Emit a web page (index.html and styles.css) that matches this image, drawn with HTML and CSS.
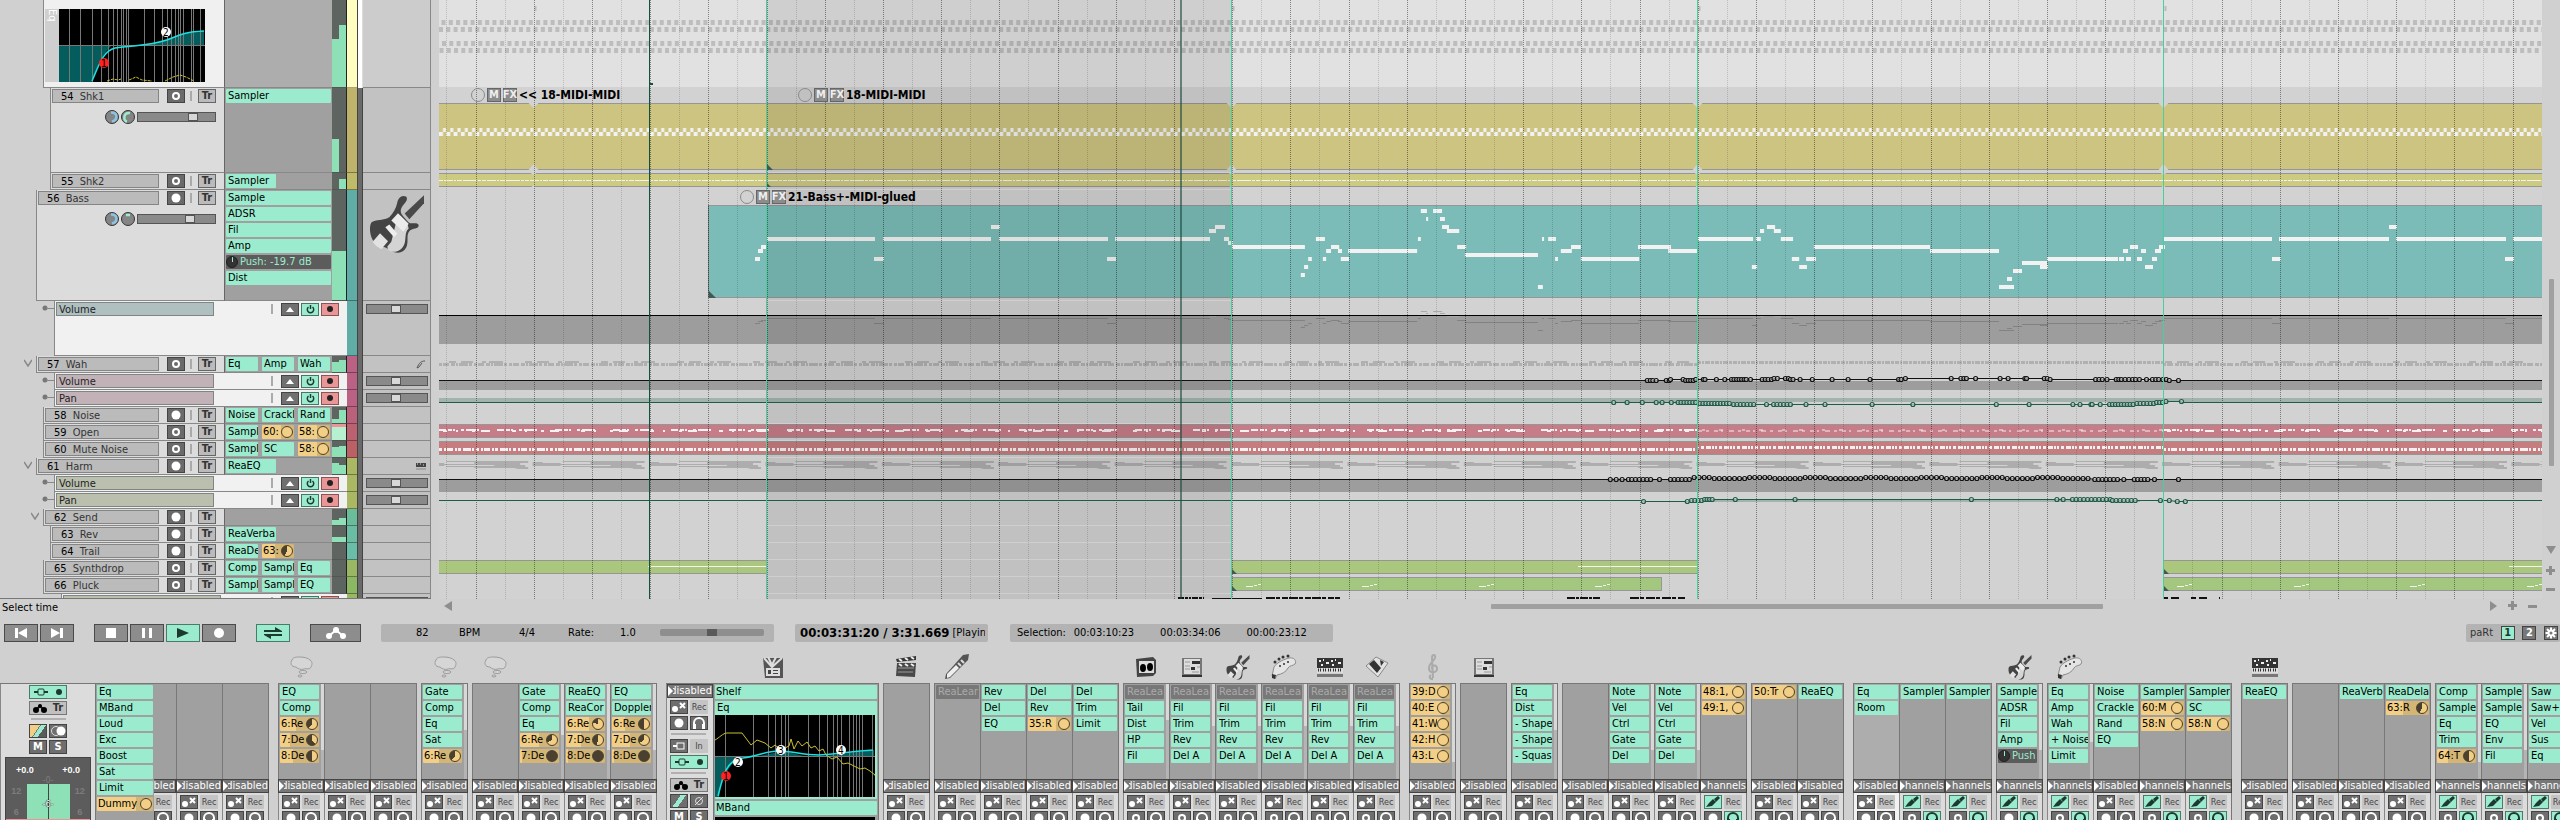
FILE: index.html
```html
<!DOCTYPE html>
<html lang="en">
<head>
<meta charset="utf-8">
<title>Arrange and mixer</title>
<link rel="stylesheet" href="styles.css">
</head>
<body>
<main class="workspace">
  <section class="tracks" id="tracks" aria-label="Track list"></section>
  <section class="arrange" id="arrange" aria-label="Arrangement"></section>
  <aside class="vscroll" aria-label="Vertical scroll">
    <div class="vscroll-thumb"></div>
    <div class="vscroll-buttons">
      <button class="bare" aria-label="Scroll down"><svg width="10" height="8"><path d="M0 0h10L5 8z"/></svg></button>
      <button class="bare" aria-label="Zoom in vertically"><svg width="10" height="10"><path d="M3 0h3v3h3v3H6v3H3V6H0V3h3z"/></svg></button>
      <button class="bare" aria-label="Zoom out vertically"><svg width="10" height="3"><path d="M0 0h9v3H0z"/></svg></button>
    </div>
  </aside>
</main>

<div class="statusbar">
  <span class="status">Select time</span>
  <div class="hscroll">
    <button class="bare" aria-label="Scroll left"><svg width="8" height="10"><path d="M8 0v10L0 5z"/></svg></button>
    <div class="hscroll-track"><div class="hscroll-thumb"></div></div>
    <div class="hscroll-end">
      <button class="bare" aria-label="Scroll right"><svg width="8" height="10"><path d="M0 0v10l7-5z"/></svg></button>
      <button class="bare" aria-label="Zoom in"><svg width="10" height="10"><path d="M3 0h3v3h3v3H6v3H3V6H0V3h3z"/></svg></button>
      <button class="bare" aria-label="Zoom out"><svg width="10" height="3"><path d="M0 0h9v3H0z"/></svg></button>
    </div>
  </div>
</div>

<nav class="transport" aria-label="Transport">
  <div class="tgroup">
    <button class="tbtn" aria-label="Go to start"><svg width="12" height="10"><path d="M0 0h3v10H0zM12 0v10L3 5z" fill="#fff"/></svg></button>
    <button class="tbtn" aria-label="Go to end"><svg width="12" height="10"><path d="M9 0h3v10H9zM0 0v10l9-5z" fill="#fff"/></svg></button>
  </div>
  <div class="tgroup">
    <button class="tbtn" aria-label="Stop"><svg width="10" height="10"><path d="M0 0h10v10H0z" fill="#fff"/></svg></button>
    <button class="tbtn" aria-label="Pause"><svg width="10" height="10"><path d="M0 0h3v10H0zM7 0h3v10H7z" fill="#fff"/></svg></button>
    <button class="tbtn on" aria-label="Play"><svg width="12" height="10"><path d="M0 0v10l12-5z" fill="#1d3a30"/></svg></button>
    <button class="tbtn" aria-label="Record"><svg width="10" height="10"><circle cx="5" cy="5" r="5" fill="#fff"/></svg></button>
  </div>
  <button class="tbtn on" aria-label="Repeat"><svg width="18" height="12"><path d="M0 3h11V0l7 4v1H0zM18 9H7v3L0 8V7h18z" fill="#1d3a30"/></svg></button>
  <button class="tbtn wide" aria-label="Envelope mode"><svg width="20" height="12"><path d="M3 9L10 3l7 6" fill="none" stroke="#fff" stroke-width="2"/><circle cx="3" cy="9" r="3" fill="#fff"/><circle cx="10" cy="3" r="3" fill="#fff"/><circle cx="17" cy="9" r="3" fill="#fff"/></svg></button>
  <div class="tbox tempo">
    <input class="bpm" aria-label="Tempo" value="82">
    <span class="bpm-label">BPM</span>
    <span class="sig">4/4</span>
    <label class="rate-label" for="rate">Rate:</label>
    <span class="rate">1.0</span>
    <input id="rate" class="rate-slider" type="range" min="0" max="100" value="50">
  </div>
  <div class="tbox clock"><b>00:03:31:20 / 3:31.669</b><span class="state">[Playin</span></div>
  <div class="tbox selection">
    <span class="sel-label">Selection:</span><span>00:03:10:23</span><span>00:03:34:06</span><span>00:00:23:12</span>
  </div>
  <div class="tbox screens">
    <span>paRt</span>
    <button class="sq on">1</button>
    <button class="sq">2</button>
    <button class="sq" aria-label="Settings"><svg width="12" height="12" viewBox="-6 -6 12 12"><g stroke="#fff" stroke-width="2"><path d="M0-5.500V5.500M-5.500 0H5.500M-4-4L4 4M4-4L-4 4"/></g><circle r="3.500" fill="#fff"/><circle r="1.500" fill="#777"/></svg></button>
  </div>
</nav>

<section class="mixer" aria-label="Mixer">
  <div class="master">
    <div class="master-panel">
      <button class="mb long on" aria-label="Routing"><svg width="14" height="8"><path d="M0 4h4M10 4h4" stroke="#1d3a30" stroke-width="2"/><rect x="4" y="1" width="6" height="6" rx="1" fill="none" stroke="#1d3a30"/></svg><svg width="6" height="6"><circle cx="3" cy="3" r="3" fill="#1d3a30"/></svg></button>
      <button class="mb long light"><svg width="14" height="10"><path d="M3 7L7 3l4 4" fill="none" stroke="#222" stroke-width="2"/><circle cx="3" cy="7" r="3"/><circle cx="7" cy="3" r="2"/><circle cx="11" cy="7" r="3"/></svg><b>Tr</b></button>
      <hr>
      <div class="mrow"><button class="mb fx3" aria-label="Effects"></button><button class="mb" aria-label="Mono"><svg width="16" height="10"><circle cx="6" cy="5" r="4.500" fill="none" stroke="#ddd"/><circle cx="11" cy="5" r="4.500" fill="#fff"/></svg></button></div>
      <div class="mrow"><button class="mb">M</button><button class="mb">S</button></div>
      <div class="bigmeter">
        <div class="peaks"><b>+0.0</b><b>+0.0</b></div>
        <div class="zero">-0-</div>
        <div class="scale"><div class="marks"><span>12</span><span>6</span></div><div class="bar"><span>-6-</span></div><div class="marks"><span>12</span><span>6</span></div></div>
        <div class="clip"></div>
      </div>
    </div>
    <div class="fxlist master-fx" id="master-fx"></div>
  </div>
  <div class="strips" id="strips"></div>
</section>
<script src="script.js"></script>
</body>
</html>
```
FILE: styles.css
```css
* { box-sizing: border-box; }
body {
  margin: 0; height: 100vh; overflow: hidden; display: flex; flex-direction: column;
  background: #d0d0d0; color: #000;
  font: 11px/14px "DejaVu Sans Condensed", "DejaVu Sans", sans-serif;
}
button { font: inherit; padding: 0; margin: 0; border: 0; display: inline-flex; align-items: center; justify-content: center; flex: none; }
svg { display: block; flex: none; }
.bare { background: none; }
.bare svg { fill: #8e8e8e; }

/* upper half */
.workspace { flex: 1; min-height: 0; display: flex; overflow: hidden; }
.tracks { width: 431px; flex: none; overflow: hidden; border-bottom: 1px solid #777; margin-right: 8px; display: flex; flex-direction: column; }
.arrange { flex: 1; min-width: 0; position: relative; overflow: hidden; background: #d2d2d2; }
.vscroll { width: 18px; flex: none; display: flex; flex-direction: column; align-items: center; justify-content: space-between; padding: 279px 0 8px; }
.vscroll-thumb { width: 5px; height: 187px; background: #a0a0a0; border-radius: 1px; }
.vscroll-buttons { display: flex; flex-direction: column; gap: 12px; align-items: center; }

/* track rows */
.track { display: flex; flex: none; height: 17px; }
.track.h88 { height: 88px; }
.track.h85 { height: 85px; }
.track.h111 { height: 111px; }
.track.h55 { height: 55px; }
.stub { flex: none; display: flex; justify-content: flex-end; padding: 3px 4px 0 0; }
.lvl1 .stub { width: 36px; }
.lvl2 .stub { width: 43px; }
.lvl3 .stub { width: 50px; }
.env .stub { width: 54px; padding: 3px 0 0; }
.lvl4 .stub { width: 61px; }
.panel { flex: 1; min-width: 0; background: #dcdcdc; border-left: 1px solid #888; border-bottom: 1px solid #888; padding: 1px 8px 0 1px; }
.sel .panel { background: #f0f0f0; }
.env .panel { background: #f1f1f1; padding-right: 8px; }
.line { display: flex; align-items: center; height: 14px; }
.name { flex: 1; height: 14px; border: 1px solid #858585; background: #bbb; line-height: 13px; color: #333; white-space: pre; overflow: hidden; padding-left: 8px; }
.name i { font-style: normal; color: #000; padding-right: 3px; }
.env .name { flex: none; width: 158px; padding-left: 2px; color: #222; border-color: #7d8585; }
.envA .name { background: #b0bfbf; }
.envB .name { background: #c2b2b8; }
.envC .name { background: #bbbfae; }
.rec { width: 18px; height: 14px; background: #6a6a6a; border: 1px solid #444; margin-left: 8px; }
.tick { width: 2px; height: 10px; background: #aaa; margin: 0 6px 0 5px; }
.env .tick { margin: 0 6px 0 auto; }
.tr { width: 18px; height: 14px; background: #bbb; border: 1px solid #666; font-weight: bold; color: #333; }
.eb { width: 18px; height: 13px; background: #707070; border: 1px solid #444; margin-left: 2px; }
.eb.pow { background: #9becce; border-color: #476; }
.eb.arm { background: #ea9696; border-color: #855; }
.mixline { display: flex; align-items: center; justify-content: flex-end; gap: 2px; padding-top: 7px; }
input[type=range] { appearance: none; margin: 0; width: 79px; height: 10px; background: #8a8a8a; border: 1px solid #555; }
input[type=range]::-webkit-slider-thumb { appearance: none; width: 10px; height: 8px; background: #d8d8d8; border: 1px solid #555; }
.rail { width: 108px; flex: none; background: #a0a0a0; border-left: 1px solid #666; border-bottom: 1px solid #888; padding: 1px 1px 0 1px; display: flex; flex-direction: column; gap: 2px; overflow: hidden; }
.rail.tri { flex-direction: row; gap: 4px; }
.tri .slot { width: 32px; flex: none; }
.rail.solo .slot { width: 50px; }
.sel .rail { background: #adadad; }
.meter { width: 15px; flex: none; border-right: 1px solid #222; border-bottom: 1px solid #555;
  background: linear-gradient(to top, #8ee1b6 var(--l), transparent 0) left / 7px 100% no-repeat, linear-gradient(to top, #8ee1b6 var(--r), transparent 0) right / 7px 100% no-repeat, #5e6460; }
.meter.hot { background: linear-gradient(#ea9696 3px, #b6f0d0 3px); }
.tint { width: 10px; flex: none; border-bottom: 1px solid rgba(0,0,0,.35); }
.edge { width: 6px; flex: none; background: #6a6a6a; border-left: 1px solid #444; border-right: 1px solid #444; }
.sel .edge { background: #fff; border-right-color: #ddd; }
.badge { width: 68px; flex: none; background: #c2c2c2; border-right: 1px solid #888; border-bottom: 1px solid #888; display: flex; align-items: center; justify-content: center; }
.badge.top { align-items: flex-start; padding: 5px 0 0; }
.env .badge.top { padding: 3px 0 0; }
.badge.right { justify-content: flex-end; padding-right: 4px; }
.badge input[type=range] { width: 62px; }
.sel .badge { background: #ccc; }
.c53 { background: #fffdbf; } .c54 { background: #bfb26a; } .c55 { background: #c0bb68; } .c56 { background: #60aca7; }
.c57 { background: #bb6184; } .c58 { background: #bb617c; } .c59 { background: #bb6170; } .c60 { background: #bb6165; }
.c61 { background: #aab863; } .c62 { background: #6abd9a; } .c63 { background: #6abda2; } .c64 { background: #6abda8; }
.c65 { background: #9ab863; } .c66 { background: #8db863; }
.eqwrap { display: flex; margin-top: 8px; }
.eqtab { width: 14px; height: 73px; background: #cfcfcf; color: #fff; writing-mode: vertical-rl; line-height: 14px; }

/* effect slots */
.slot { height: 14px; flex: none; background: #9becce; border-radius: 1px; padding: 0 0 0 2px; line-height: 14px; white-space: nowrap; overflow: hidden; display: flex; color: #000; text-align: left; justify-content: flex-start; }
.slot span { flex: 1; min-width: 0; overflow: hidden; }
.slot.off { background: #787878; color: #aaa; }
.slot.knob { background: #5c5c5c; color: #9becce; padding-left: 0; gap: 2px; }
.slot.send { padding: 0 1px 0 1px; background: linear-gradient(to right, #f2cf85 var(--fill), #d4b574 0); }
.dial { width: 12px; height: 12px; margin: 1px 0; border-radius: 50%; border: 1px solid #4a4030; flex: none; background: conic-gradient(#f2cf85 var(--p), #4a4030 0); }
.knob .dial { background: linear-gradient(#9becce, #9becce) center top / 1px 5px no-repeat, #333; border-color: #222; }

/* arrangement overlays */
.head { position: absolute; display: flex; align-items: center; gap: 2px; font-size: 12px; font-weight: bold; white-space: nowrap; }
.head button { width: 14px; height: 14px; background: #8c8c8c; border: 1px solid #666; color: #eee; font-size: 11px; }
.head .ring { background: none; border: 1px solid #8a8a8a; border-radius: 50%; }

/* status and transport */
.statusbar { height: 18px; flex: none; display: flex; align-items: center; }
.status { width: 431px; flex: none; padding-left: 2px; }
.hscroll { flex: 1; display: flex; align-items: center; padding: 0 22px 4px 13px; }
.hscroll-track { flex: 1; }
.hscroll-thumb { width: 30%; height: 5px; background: #a0a0a0; border-radius: 1px; margin-left: 51%; }
.hscroll-end { display: flex; align-items: center; gap: 10px; }
.transport { flex: none; height: 31px; display: flex; align-items: center; padding-left: 4px; }
.tgroup { display: flex; gap: 2px; margin-right: 20px; }
.tbtn { width: 34px; height: 18px; background: #8d8d8d; border: 1px solid #4a4a4a; }
.tbtn.on { background: #9becce; border-color: #4a7a68; }
.transport > .tbtn { margin-right: 20px; }
.tbtn.wide { width: 51px; }
.tbox { height: 18px; background: #b3b3b3; border-radius: 2px; display: flex; align-items: center; margin-right: 21px; overflow: hidden; white-space: nowrap; }
.tempo { width: 393px; }
.tempo > * { flex: none; }
.bpm { width: 78px; padding: 0 0 0 35px; border: 0; background: none; font: inherit; }
.bpm-label { width: 60px; }
.sig { width: 49px; }
.rate-label { width: 52px; }
.rate { width: 40px; }
input.rate-slider { width: 104px; height: 7px; background: #8e8e8e; border: 0; border-radius: 2px; }
input.rate-slider::-webkit-slider-thumb { height: 7px; background: #5a5a5a; border: 0; }
.clock { width: 193px; padding: 0 3px 0 5px; gap: 3px; margin-right: 22px; }
.clock b { font-size: 13px; }
.state { overflow: hidden; }
.selection { width: 323px; padding-left: 7px; }
.selection span { width: 90px; }
.selection .sel-label { width: 59px; }
.screens { width: 94px; margin: 0 0 0 auto; padding: 0 2px 0 4px; justify-content: space-between; color: #333; }
.sq { width: 14px; height: 14px; background: #777; border: 1px solid #444; color: #fff; font-weight: bold; }
.sq.on { background: #9becce; color: #1d3a30; }

/* mixer */
.mixer { height: 172px; flex: none; display: flex; overflow: hidden; }
.master { display: flex; flex: none; margin-top: 35px; border-top: 1px solid #777; }
.master-panel { width: 95px; background: #dcdcdc; border-left: 1px solid #888; display: flex; flex-direction: column; align-items: center; gap: 2px; padding-top: 1px; }
.master-panel hr { width: 35px; height: 2px; border: 0; background: #b0b0b0; margin: 1px 0 2px; flex: none; }
.mrow { display: flex; gap: 2px; }
.mb { width: 18px; height: 14px; background: #6e6e6e; border: 1px solid #444; color: #fff; font-weight: bold; }
.mb.long { width: 38px; justify-content: space-around; }
.mb.on { background: #9becce; border-color: #4a7a68; }
.mb.light { background: #c0c0c0; border-color: #777; color: #333; }
.mb.fx3 { background: linear-gradient(125deg, #f2cf85 42%, #777 42% 46%, #9becce 46% 66%, #5a5a5a 66%); }
.mb.fx2 { background: linear-gradient(125deg, #6e6e6e 40%, #9becce 40% 62%, #6e6e6e 62%); }
.bigmeter { width: 86px; flex: 1; margin-top: 1px; background: #5c5c5c; border: 1px solid #444; color: #fff; display: flex; flex-direction: column; }
.peaks { display: flex; justify-content: space-between; padding: 6px 10px 0; font: bold 9px/12px "Liberation Sans", sans-serif; }
.zero { text-align: center; font-size: 9px; line-height: 8px; color: #7c7c7c; }
.scale { display: flex; flex: 1; min-height: 0; }
.marks { flex: 1; display: flex; flex-direction: column; gap: 7px; align-items: center; color: #7c7c7c; font: bold 9px/14px "Liberation Sans", sans-serif; }
.bar { width: 43px; background: linear-gradient(#444, #444) center / 1px 100% no-repeat, #8ee1b6; display: flex; justify-content: center; padding-top: 13px; font-size: 9px; text-shadow: 0 0 1px #000, 0 0 1px #000; }
.clip { height: 1px; background: #ea9696; }
.fxlist { background: #a0a0a0; border-left: 1px solid #777; padding: 1px 1px 0; display: flex; flex-direction: column; gap: 2px; flex: 1; min-width: 0; min-height: 0; overflow: hidden; }
.master-fx { width: 59px; flex: none; }
.strips { flex: 1; min-width: 0; display: flex; overflow: hidden; }
.group { display: flex; flex: none; margin-right: 4px; }
.group.far { margin-right: 9px; }
.group > .strip:last-child { width: 47px; }
.group > .strip:last-child .well, .group > .strip:last-child .ctl { border-right: 1px solid #777; }
.cutter { width: 22px; overflow: hidden; display: flex; justify-content: flex-end; flex: none; }
.strip { width: 46px; flex: none; display: flex; flex-direction: column; }
.icon { height: 35px; display: flex; align-items: center; justify-content: center; padding-top: 3px; flex: none; }
.well { height: 96px; flex: none; display: flex; border-top: 1px solid #777; background: #a0a0a0; }
.strip.lit .well { background: #adadad; }
.well .fxlist { background: none; }
.well .thumb { width: 3px; margin-left: 1px; background: linear-gradient(#d8d8d8 var(--t), #b4b4b4 0); }
.mode { height: 14px; flex: none; background: #777; border: 1px solid #444; color: #fff; width: 100%; justify-content: flex-start; }
.mode svg { fill: #fff; }
.mode span { flex: 1; min-width: 0; overflow: hidden; display: flex; justify-content: flex-end; }
.ctl { flex: 1; background: #dcdcdc; border-left: 1px solid #888; display: grid; grid-template-columns: 18px 18px; gap: 2px; padding: 2px 0 0 3px; align-content: start; }
.strip.lit .ctl { background: #f2f2f2; }
.chip { background: #c4c4c4; height: 14px; color: #444; font: 9px/14px "DejaVu Sans Condensed", "DejaVu Sans", sans-serif; border-radius: 1px; }
.wide-strip { width: 213px; flex: none; }
.wide-body { display: flex; height: 137px; border-top: 1px solid #777; border-right: 1px solid #777; overflow: hidden; }
.wide-ctl { width: 47px; flex: none; background: #dcdcdc; border-left: 1px solid #888; display: flex; flex-direction: column; }
.wide-ctl .ctl { border: 0; }
.wide-ctl hr { grid-column: 1 / 3; width: 35px; height: 2px; border: 0; background: #b0b0b0; margin: 1px 0 2px 1px; }
.wide-ctl .mb.long { grid-column: 1 / 3; }
.wide-fx .slot { padding-left: 1px; }
.wide-fx .slot.eq { height: 98px; display: block; padding: 0; }
.wide-fx .slot.eq > b { display: block; font-weight: normal; padding-left: 2px; }
```
FILE: script.js
```js
const $ = id => document.getElementById(id);

/* ---------- small drawings ---------- */
const guitar = (w, h) => `<svg width="${w}" height="${h}" viewBox="0 0 162 176">
  <path d="M162 0v24L118 72 104 55z" fill="#4a4a4a"/>
  <path d="M108 4c-14-6-24 6-26 18-4 18-12 32-24 44-14 10-42 6-54 16-8 14-4 44 8 58 12 14 26 12 40 20 24 18 48 16 56-2 10-20-2-38 12-52 8-8 26-4 26-16-2-10-18-4-26-6-8-4-12-12-20-20-10-10-10-20-2-32 8-10 18-20 10-28z" fill="#444"/>
  <path d="M84 58c14 8 30 26 32 42-12 10-8 30-12 44-6 22-32 34-50 20L52 154 64 140z" fill="#d4d4d4"/>
  <path d="M84 54l32 32-16 24-36-34z" fill="#ececec"/>
  <path d="M46 96l12-8 24 28-10 10z" fill="#eee"/>
  <path d="M8 140l22-26 24 24-20 24c-12-6-20-12-26-22z" fill="#e2e2e2"/></svg>`;
const icons = {
  guitar: guitar(24, 25),
  bubble: '<svg width="24" height="22" viewBox="0 0 24 22"><g fill="#d6d6d6" stroke="#9c9c9c"><path d="M3 4C4 1 8 1 11 1c4 0 8 1 10 3 3 2 2 5 1 7-1 3-5 1-7 2-3 1-6 0-8-2C2 11 1 7 3 4z"/><ellipse cx="14" cy="16" rx="4" ry="1.500"/><ellipse cx="11" cy="20" rx="2" ry="1"/></g></svg>',
  drums: '<svg width="22" height="23" viewBox="0 0 22 23"><path d="M1 2h20v20H3z" fill="#555"/><path d="M2 2l8 9 10-9M6 1l4 8 4-8" stroke="#ddd" stroke-width="2" fill="none"/><path d="M4 12h14v8H4z" fill="#ddd"/><path d="M6 14h3v4H6zM11 14h5v1h-5zM11 17h5v1h-5z" fill="#444"/></svg>',
  clap: '<svg width="24" height="24" viewBox="0 0 24 24"><path d="M2 8h19l-1 14-19-1z" fill="#484848"/><path d="M1 4L21 1v4L2 7z" fill="#333"/><path d="M4 4l3 2M10 3l3 2M16 2l3 2M4 9l3 2M10 9l3 2M16 9l3 2" stroke="#eee" stroke-width="2"/><path d="M3 13h16M3 17h15" stroke="#999"/></svg>',
  jack: '<svg width="26" height="26" viewBox="0 0 26 26"><path d="M2 20L19 1l6-1-1 6L6 24l-5 1z" fill="#555"/><path d="M3 20l9-9 3 3-9 9-3 1z" fill="#eee"/><path d="M14 9l3 3M17 6l3 3" stroke="#ddd" stroke-width="2"/></svg>',
  speaker: '<svg width="22" height="22" viewBox="0 0 22 22"><path d="M1 3l17-2 3 3v13l-3 3-16 1z" fill="#444"/><path d="M4 5h15v12H4z" fill="#ddd"/><ellipse cx="8" cy="12" rx="3" ry="4"/><ellipse cx="15" cy="11" rx="3" ry="4"/></svg>',
  desk: '<svg width="22" height="21" viewBox="0 0 22 21"><path d="M1 1h20v19H1z" fill="#777"/><path d="M3 2h16v15H3z" fill="#ddd"/><path d="M11 4h8v3h-8zM10 10h4v3h-4z" fill="#333"/><path d="M4 5h5M4 9h5M4 12h5M11 15h7M16 10h3" stroke="#999" stroke-width="1"/><path d="M1 18h20v2H1z" fill="#333"/></svg>',
  head: '<svg width="26" height="26" viewBox="0 0 26 26"><path d="M1 22l2-9C6 8 14 5 18 4c5-1 8 3 6 6-2 2-5 1-7 4-2 4-6 6-11 7l-2 4z" fill="#e4e4e4" stroke="#8a8a8a"/><path d="M1 20l4 1-1 4-3-1z" fill="#333"/><g fill="#333"><circle cx="4" cy="8" r="1.500"/><circle cx="8" cy="5" r="1.500"/><circle cx="12" cy="3" r="1.500"/><circle cx="17" cy="2" r="1.500"/><circle cx="9" cy="12" r="1"/><circle cx="13" cy="10" r="1"/><circle cx="17" cy="8" r="1"/></g></svg>',
  synth: '<svg width="26" height="19" viewBox="0 0 26 19"><path d="M0 0h26v10H0z" fill="#333"/><path d="M2 3h2M6 2h1M9 5h3M14 3h2M18 2h1M21 5h3M4 7h2M15 7h2" stroke="#eee" stroke-width="2"/><path d="M0 10h26v5H0z" fill="#ddd"/><path d="M1 12h25" stroke="#333" stroke-width="3" stroke-dasharray="1 1 1 2"/><path d="M0 16h26v3H0z" fill="#777"/></svg>',
  keys: '<svg width="24" height="24" viewBox="0 0 24 24"><path d="M1 11L11 2l12 6-10 14z" fill="#e2e2e2" stroke="#888"/><path d="M4 9l5-4 7 8-4 5zM15 5l4 2-3 4z" fill="#333"/></svg>',
  clef: '<svg width="14" height="26" viewBox="0 0 14 26"><path d="M7 25c-4 0-4-3-2-4M7 24L6 4c0-4 4-4 3 0-1 3-7 6-6 11 1 5 9 4 8-1-1-4-6-3-5 1" fill="none" stroke="#aaa" stroke-width="2"/></svg>',
};
const jackOff = '<svg width="16" height="12"><circle cx="4" cy="8" r="3" fill="#fff"/><path d="M9 2l5 5M14 2L9 7" stroke="#fff" stroke-width="2"/></svg>';
const jackOn = '<svg width="16" height="12"><path d="M1 11l3-4 3 3zM4 7l4-4 3 3-4 4zM9 3l4-3 2 2-4 4z" fill="#1d3a30"/></svg>';
const phones = c => `<svg width="14" height="12"><path d="M2 9V6a5 5 0 0 1 10 0v3" fill="none" stroke="${c}" stroke-width="2"/><path d="M1 7h3v5H1zM10 7h3v5h-3z" fill="${c}"/></svg>`;
const dot = ring => `<svg width="10" height="10"><circle cx="5" cy="5" r="${ring ? 3 : 4.5}" fill="${ring ? 'none' : '#fff'}" stroke="#fff" stroke-width="${ring ? 2 : 0}"/></svg>`;

/* ---------- effect slots ---------- */
/* "~x" bypassed, "%x" parameter knob, "@x|value|fill" send */
function slot(t) {
  if (t[0] === '~') return `<button class="slot off"><span>${t.slice(1)}</span></button>`;
  if (t[0] === '%') return `<button class="slot knob"><i class="dial"></i><span>${t.slice(1)}</span></button>`;
  if (t[0] === '@') {
    const [n, p = 100, f = 80] = t.slice(1).split('|');
    return `<button class="slot send" style="--p:${p}%;--fill:${f}%"><span>${n}</span><i class="dial"></i></button>`;
  }
  return `<button class="slot"><span>${t}</span></button>`;
}

/* ---------- equaliser graphs ---------- */
const eqLines = [10, 21, 33, 42, 49, 54, 58, 62, 64, 67, 69, 85, 95, 103, 108, 112, 116, 119, 121, 124, 132, 134, 141];
const node = (x, y, n, c) => `<circle cx="${x}" cy="${y}" r="5" fill="${c}"/><text x="${x - 3}" y="${y + 4}" font-size="10">${n}</text>`;
const smallEq = `<svg width="146" height="73"><path d="M0 0h146v73H0z"/><path d="M0 37h52c-10 10-14 24-19 36H0z" fill="#045c5c"/><path d="M80 36c30-3 40-14 65-14v14z" fill="#045c5c"/>
<g stroke="#777">${eqLines.map(x => `<path d="M${x}.5 0v73"/>`).join('')}<path d="M0 36.500h146"/></g>
<path d="M33 72C40 56 44 42 56 39c20-3 34-2 52-8 15-6 18-8 37-9" fill="none" stroke="#1de0e0" stroke-width="1.500"/>
<path d="M48 72l6-2 5 1 3-1M70 71l7-3 6 3 10 1M106 72l8-4 7-2 6 2 8 4" fill="none" stroke="#c8c030" stroke-dasharray="3 1"/>
${node(45, 54, 1, '#f22')}${node(107, 23, 2, '#fff')}</svg>`;
const bigLines = [10, 38, 53, 60, 66, 70, 73, 93, 104, 112, 118, 122, 126, 134, 138, 141, 144, 147, 157];
const bigEq = `<svg width="160" height="82"><path d="M0 0h160v82H0z"/><path d="M0 42h30C16 44 8 60 4 82H0z" fill="#045c5c"/><path d="M40 42l28-6 25 6zM110 41l49-6v6z" fill="#045c5c"/>
<g stroke="#777">${bigLines.map(x => `<path d="M${x}.500 0v82"/>`).join('')}<path d="M0 41.500h160"/></g>
<path d="M0 25c4-2 8-7 12-7h15l9 12 6-5 8 3 6 5 4-3 6 5 8-4 2-7 3 10 4-8 4 5 5-4 4 6 4-2 4 5 4-2 3 6 6 4 5-2 6 7 5-1 6 3 6 3 5-1 5 3 5 4 4 10" fill="none" stroke="#c8c030"/>
<path d="M3 81C8 60 12 44 28 43c16-2 22-7 36-7 14 0 22 4 40 4 20-1 24-3 54-5" fill="none" stroke="#1de0e0" stroke-width="1.500"/>
${node(11, 61, 1, '#f22')}${node(23, 47, 2, '#fff')}${node(66, 35, 3, '#fff')}${node(126, 35, 4, '#fff')}</svg>`;

/* ---------- track list ---------- */
const chevron = '<svg width="8" height="8"><path d="M0 1l4 6 4-6" fill="none" stroke="#888" stroke-width="1.500"/></svg>';
const pin = '<svg width="12" height="8"><circle cx="3" cy="4" r="2.500" fill="#777"/><path d="M4 4.500h8" stroke="#888"/></svg>';
const pot = (c, d) => `<svg width="14" height="14"><circle cx="7" cy="7" r="6.500" fill="#858585" stroke="#333"/><path d="${d}" fill="none" stroke="${c}" stroke-width="2.500"/></svg>`;
const potA = pot('#8cc4e4', 'M6 2.500C13 2 13 10 7 11.500');
const vol = (label, v) => `<input type="range" aria-label="${label}" min="0" max="100" value="${v}">`;
function track(o) {
  const line = `<div class="line"><div class="name"><i>${o.n}</i> ${o.name}</div><button class="rec" aria-label="Record arm">${dot(o.ring)}</button><i class="tick"></i><button class="tr">Tr</button></div>`;
  const body = o.eq ? `<div class="eqwrap"><div class="eqtab">Eq</div>${smallEq}</div>` : line + (o.mix || '');
  return `<div class="track lvl${o.lvl} ${o.cls || ''}"><div class="stub">${o.fold ? chevron : ''}</div><div class="panel">${body}</div>
    <div class="rail ${o.rail || ''}">${(o.fx || []).map(slot).join('')}</div>
    <div class="meter ${o.hot ? 'hot' : ''}" style="--l:${o.m[0]}px;--r:${o.m[1]}px"></div><div class="tint c${o.n}"></div><div class="edge"></div>
    <div class="badge ${o.bcls || ''}">${o.badge || ''}</div></div>`;
}
function envelope(name, kind, c, cls = '') {
  return `<div class="track env ${kind} ${cls}"><div class="stub">${pin}</div><div class="panel"><div class="line"><div class="name">${name}</div><i class="tick"></i>
    <button class="eb" aria-label="Hide"><svg width="8" height="5"><path d="M0 5h8L4 0z" fill="#fff"/></svg></button>
    <button class="eb pow" aria-label="Bypass"><svg width="9" height="9"><path d="M2.500 2a3.200 3.200 0 1 0 4 0M4.500 0v4" fill="none" stroke="#1d3a30" stroke-width="1.500"/></svg></button>
    <button class="eb arm" aria-label="Arm"><svg width="6" height="6"><circle cx="3" cy="3" r="3" fill="#222"/></svg></button></div></div>
    <div class="tint c${c}"></div><div class="edge"></div><div class="badge top">${vol(name, 48)}</div></div>`;
}
$('tracks').innerHTML = [
  track({ n: 53, eq: 1, lvl: 2, cls: 'h88 sel', m: [48, 62] }),
  track({ n: 54, name: 'Shk1', lvl: 3, ring: 1, cls: 'h85', fx: ['Sampler'], m: [33, 0], mix: `<div class="mixline">${potA}${pot('#9becce', 'M9 3C2 2 2 11 6 11.500')}${vol('Volume', 74)}</div>` }),
  track({ n: 55, name: 'Shk2', lvl: 3, ring: 1, rail: 'solo', fx: ['Sampler'], m: [0, 10] }),
  track({ n: 56, name: 'Bass', lvl: 1, cls: 'h111', fx: ['Sample', 'ADSR', 'Fil', 'Amp', '%Push: -19.7 dB', 'Dist'], m: [49, 49], badge: guitar(54, 59), bcls: 'top', mix: `<div class="mixline">${potA}${pot('#9becce', 'M5 3h4')}${vol('Volume', 70)}</div>` }),
  envelope('Volume', 'envA', 56, 'h55'),
  track({ n: 57, name: 'Wah', lvl: 1, ring: 1, fold: 1, rail: 'tri', fx: ['Eq', 'Amp', 'Wah'], m: [10, 12], bcls: 'right', badge: '<svg width="10" height="9"><path d="M1 8C3 3 5 1 9 1M1 8l2-1 3-4" fill="none" stroke="#555"/></svg>' }),
  envelope('Volume', 'envB', 57), envelope('Pan', 'envB', 57),
  track({ n: 58, name: 'Noise', lvl: 2, rail: 'tri', fx: ['Noise', 'Crackl', 'Rand'], m: [4, 13] }),
  track({ n: 59, name: 'Open', lvl: 2, ring: 1, rail: 'tri', fx: ['Sampl', '@60:|100|60', '@58:|100|60'], m: [14, 14], hot: 1 }),
  track({ n: 60, name: 'Mute Noise', lvl: 2, ring: 1, rail: 'tri', fx: ['Sampl', 'SC', '@58:|100|60'], m: [10, 11] }),
  track({ n: 61, name: 'Harm', lvl: 1, fold: 1, rail: 'solo', fx: ['ReaEQ'], m: [11, 9], bcls: 'right', badge: '<svg width="10" height="7"><path d="M0 0h10v4H0z" fill="#444"/><path d="M1 1h1M4 1h1M7 2h1" stroke="#ddd"/><path d="M0 6h10" stroke="#888"/></svg>' }),
  envelope('Volume', 'envC', 61), envelope('Pan', 'envC', 61),
  track({ n: 62, name: 'Send', lvl: 2, fold: 1, m: [5, 7] }),
  track({ n: 63, name: 'Rev', lvl: 3, rail: 'solo', fx: ['ReaVerba'], m: [5, 5] }),
  track({ n: 64, name: 'Trail', lvl: 3, rail: 'tri', fx: ['ReaDe', '@63:|58|40'], m: [0, 0] }),
  track({ n: 65, name: 'Synthdrop', lvl: 2, ring: 1, rail: 'tri', fx: ['Comp', 'Sampl', 'Eq'], m: [0, 0] }),
  track({ n: 66, name: 'Pluck', lvl: 2, ring: 1, rail: 'tri', fx: ['Sampl', 'Sampl', 'EQ'], m: [0, 0] }),
  envelope('', 'envC lvl4', 65),
].join('');

/* ---------- arrangement ---------- */
const LEFT = 439, RIGHT = 2600, BAR = 58.2, SEL = 766, END = 1231.5;
const r = (x, y, w, h, f, more = '') => `<rect x="${x}" y="${y}" width="${w}" height="${h}" fill="${f}" ${more}/>`;
const seg = (x1, x2, y, h, f) => r(x1, y, x2 - x1, h, f);
const item = (x1, x2, y, h, f) => seg(x1, x2, y, h, '#969696') + seg(x1, x2, y + 1, h - 2, f);
const dash = (x1, x2, y, w, pattern, c = '#f2f2f2') => `<path d="M${x1} ${y}H${x2}" stroke="${c}" stroke-width="${w}" stroke-dasharray="${pattern}"/>`;
const corner = (x, y, s = 6) => `<path d="M${x} ${y - s}l${s} ${s}h-${s}z" fill="#3f5a50"/>`;

const bass = [[755, 760, 257], [758, 763, 249], [761, 766, 245], [766, 875, 237], [874, 884, 257], [883, 991, 237], [991, 1000, 225], [999, 1108, 237], [1107, 1116, 257], [1115, 1210, 237], [1209, 1216, 229], [1215, 1225, 225], [1224, 1229, 237], [1228, 1233, 241]];
[[29, 208, 245], [198, 208, 273], [206, 216, 265], [216, 225, 257], [235, 257, 237], [252, 260, 257], [260, 272, 249], [272, 292, 245], [289, 299, 249], [296, 316, 257], [314, 483, 249], [485, 492, 237], [492, 507, 209], [505, 510, 217], [522, 544, 209], [539, 551, 217], [544, 561, 225], [556, 586, 229], [581, 603, 245], [600, 779, 253], [779, 791, 285], [789, 794, 237], [804, 823, 237], [821, 828, 257], [835, 862, 249], [860, 884, 245], [884, 1027, 257], [1024, 1105, 245], [1098, 1169, 249], [1170, 1306, 237], [1303, 1316, 265], [1313, 1325, 237], [1323, 1333, 229], [1340, 1360, 225], [1357, 1374, 229], [1374, 1404, 237], [1401, 1419, 257], [1419, 1438, 265], [1436, 1460, 257], [1455, 1680, 245]]
  .forEach(([a, b, y]) => bass.push([1220 + a / 2.45, 1220 + b / 2.45, y]));
bass.push([1905, 1930, 245], [1930, 1999, 249], [1999, 2014, 285], [2007, 2012, 277], [2013, 2022, 269], [2022, 2047, 261]);
[[0, 24, 265], [21, 234, 257], [237, 252, 257], [249, 264, 249], [258, 273, 257], [270, 294, 245], [291, 306, 257], [303, 318, 249], [315, 339, 265], [336, 351, 257], [345, 363, 249], [357, 375, 245], [372, 696, 237], [696, 722, 257], [717, 1047, 237], [1047, 1071, 225], [1068, 1398, 237], [1395, 1422, 257], [1419, 1680, 237]]
  .forEach(([a, b, y]) => bass.push([2040 + a / 3, 2040 + b / 3, y]));

let s = '';
s += seg(LEFT, RIGHT, 0, 87, '#e1e1e1');
s += `<defs><pattern id="hat" x="439" width="7.275" height="8" y="128" patternUnits="userSpaceOnUse"><path d="M4 0h3v4H4zM0 4h4v4H0z" fill="#f2f2f2"/></pattern></defs>`;
[[22.5, 2.5], [29.5, 0], [43.5, 3], [50.5, 0.5]].forEach(([y, o]) => { s += dash(LEFT + o, RIGHT, y, 5, '4 3.275', '#bdbdbd'); });
s += item(LEFT, RIGHT, 103, 67, '#cdc481') + seg(LEFT, RIGHT, 128, 8, 'url(#hat)');
s += item(LEFT, RIGHT, 173, 14, '#cdca81') + dash(LEFT, RIGHT, 180.5, 1, '4 1 9 1 2 1 5 1 14 1 3 1');
[533.5, 1231.5, 1697.5, 2163.5].forEach(x => {
  s += `<path d="M${x - 5} 103h10l-5 5zM${x - 5} 170h10l-5-6zM${x - 3} 173h6l-3 2zM${x - 2} 187h4l-2-2z" fill="#d2d2d2"/>`;
  s += r(x + 1, 6, 2, 5, '#bbb');
});
s += item(708, RIGHT, 205, 93, '#7bbcb8') + r(708, 205, 1, 93, '#777');
bass.forEach(([a, b, y]) => { s += seg(a, b, y, 4, '#f2f2f2'); });
s += seg(LEFT, RIGHT, 316, 28, '#9d9d9d');
bass.forEach(([a, b, y]) => { s += seg(a, b, Math.round(318 + (y - 237) / 4), 1, y < 237 ? '#aaa' : '#828282'); });
s += seg(LEFT, RIGHT, 315, 1, '#000');
s += dash(LEFT, 1697, 364.5, 3, '3 1 6 2 4 1 2 1 9 1 3 2', '#b0b0b0') + dash(LEFT + 10, 1697, 362, 2, '7 5 12 9 4 3 14 22', '#b0b0b0');
s += dash(1697, 2163, 362.5, 3, '4 1 2 1 5 1 3 1', '#b0b0b0') + dash(2163, RIGHT, 364.5, 3, '3 1 6 2 4 1 2 1', '#b0b0b0') + dash(2165, RIGHT, 362, 2, '7 5 12 9 4 3 14 22', '#b0b0b0');
s += seg(LEFT, RIGHT, 381, 9, '#9d9d9d') + seg(LEFT, RIGHT, 398, 4, '#a2b3ad');
s += item(LEFT, RIGHT, 424, 14, '#c67d88') + item(LEFT, RIGHT, 441, 14, '#c67d80');
[[LEFT, 1697], [2163, RIGHT]].forEach(([a, b]) => {
  s += dash(a, b, 430, 2, '7 2 4 1 2 6 3 2 10 1 2 18', '#f2f2f2') + dash(a + 4, b, 431, 2, '4 9 2 14 3 6 9 22');
  s += dash(a, b, 449.5, 3, '3 2 2 1 6 2 2 1 3 2 8 1 2 2');
});
s += dash(1697, 2163, 431, 1, '5 4 3 5 4 3 2 6') + dash(1702, 2163, 430, 1, '3 14 4 19') + dash(1697, 2163, 447.5, 3, '2 2 3 2 5 1 2 1');
for (let x = LEFT - 22.8; x < RIGHT; x += BAR * 2) {
  s += `<path d="M${x} 462h10v1h18v3H${x}zM${x + 30} 461h28v1h-28zM${x + 30} 466h28v1h-28zM${x + 28} 464h30v1h-30zM${x + 58} 461h54v2h-8v2h5v2h3v2h-10l-4-1h-40v-2h20v-1h-20z" fill="#adadad"/>`;
}
s += seg(LEFT, RIGHT, 480, 12, '#9d9d9d') + seg(1703, 2140, 500, 2, '#a2b3ad');
s += item(300, SEL, 560, 14, '#abc77d') + seg(648, SEL, 566, 1, '#f2f2f2');
s += item(1231, 1697, 560, 14, '#abc77d') + seg(1578, 1697, 566, 1, '#f2f2f2') + item(1231, 1662, 577, 14, '#a4c77f') + r(1661, 577, 1, 14, '#969696');
s += item(2163, RIGHT, 560, 14, '#abc77d') + seg(2509, RIGHT, 566, 1, '#f2f2f2') + item(2163, RIGHT, 577, 14, '#a4c77f');
[1246, 1362, 1479, 1595, 2177, 2294, 2410, 2527].forEach(x => { s += r(x, 586, 4, 1, '#f2f2f2') + r(x + 4, 586, 3, 1, '#f2f2f2') + r(x + 8, 585, 3, 1, '#f2f2f2') + r(x + 12, 584, 3, 1, '#f2f2f2'); });
s += r(SEL, 0, END - SEL, 599, '#000', 'opacity=".08"');
[172, 189, 300, 423, 440, 457, 525, 542, 559, 576, 593].forEach(y => { s += r(SEL, y, END - SEL, 1, '#cfcfcf'); });
for (let i = -11; SEL + i * BAR / 2 < RIGHT; i++) {
  s += `<path d="M${Math.round(SEL + 0.5 + i * BAR / 2) + 0.5} 0V599" stroke="#000" opacity="${i % 2 ? '.16' : '.42'}" stroke-dasharray="1 1"/>`;
}
s += corner(SEL, 170, 7) + corner(SEL, 187, 5) + corner(709, 298, 7) + corner(1232, 574, 5) + corner(1232, 591, 5) + corner(2164, 574, 5) + corner(2164, 591, 5);

/* envelopes; points are [x, y] with x in automation units */
const ux = v => 1540 + v / 2.3758;
const run = (a, b, step, y) => { const o = []; for (let v = a; v <= b; v += step) o.push([v, typeof y === 'function' ? y(v) : y]); return o; };
const list = (y, ...v) => v.map(x => [x, y]);
function env(base, pts, c) {
  const p = pts.map(([v, y]) => [ux(v), y + 0.5]);
  return `<path d="M${LEFT} ${base + 0.5}H${p[0][0]}${p.map(q => 'L' + q.join(' ')).join('')}V${base + 0.5}H${RIGHT}" fill="none" stroke="${c}"/>` +
    p.map(([x, y]) => `<circle cx="${x.toFixed(1)}" cy="${y}" r="2" fill="#d2d2d2" fill-opacity=".7" stroke="${c}" stroke-width="1.200"/>`).join('');
}
s += env(380, [...list(380, 255, 262, 268, 276, 300, 307), ...list(379, 310, 340), ...list(380, 346, 352, 358, 364), ...list(379, 370, 388, 392, 419, 439, 455, 461, 467, 473, 479, 485, 490, 500, 528, 535, 542, 550), ...list(378, 556, 564, 583, 590), ...list(379, 595, 601, 618, 647, 694, 732, 784, 852, 858), ...list(378, 868, 977, 1000, 1007, 1013, 1035, 1093, 1112, 1152, 1156, 1198, 1205), ...list(379, 1212, 1320, 1328, 1336, 1347, 1369, 1375, 1381, 1390, 1399, 1408, 1415, 1424, 1441, 1455, 1463, 1470, 1480, 1488), ...list(380, 1495, 1517)], '#111');
s += env(402, [...list(402, 175, 207, 243, 276, 290, 312), ...run(328, 374, 7, 402), ...run(380, 455, 7, 403), ...run(460, 515, 8, 404), ...list(404, 538, 555, 563, 571, 579, 587, 595, 632, 677, 789, 886, 1084, 1162, 1266, 1283, 1309, 1312, 1331), ...run(1353, 1412, 7, 404), ...run(1418, 1460, 8, 403), ...run(1465, 1480, 7, 402), [1487, 401], [1524, 401]], '#1d5c48');
s += env(479, [...list(479, 167, 181, 195, 210), ...run(218, 268, 9, 479), [284, 479], ...run(310, 358, 9, 479), ...run(366, 1310, 12, v => Math.round(477.6 + 0.9 * Math.sin(v / 22))), ...run(1318, 1380, 9, 479), ...list(479, 1387, 1412, 1420, 1428, 1436, 1444, 1460, 1517)], '#111');
s += env(500, [[246, 501], [350, 501], ...run(360, 384, 8, 500), ...run(391, 410, 6, 499), ...list(499, 464, 606, 1025, 1228, 1243), ...run(1265, 1355, 9, 499), ...run(1360, 1422, 9, 500), ...list(500, 1474, 1495), ...list(501, 1514, 1533)], '#1d5c48');
s += dash(1178, 1204, 598, 2, '6 1 3 1 2 1', '#111') + seg(1212, 1262, 598, 1, '#111') + dash(1266, 1340, 598, 2, '9 1 4 2 6 1', '#111') + dash(1567, 1600, 598, 2, '8 1 3 1', '#111') + dash(1630, 1685, 598, 2, '9 1 4 2', '#111') + dash(2163, 2220, 598, 2, '5 3 8 12', '#111');
[SEL, 1231, 1697, 2163].forEach(x => { s += r(x, 0, 1, 599, '#48cf9c'); });
s += r(649, 0, 1, 599, '#145040') + r(650, 83, 3, 2, '#145040') + r(1180, 0, 2, 599, '#1c4a3c', 'opacity=".6"');

const head = (x, y, t) => `<div class="head" style="left:${x - LEFT}px;top:${y}px"><button class="ring" aria-label="Item volume"></button><button>M</button><button>FX</button><span>${t}</span></div>`;
$('arrange').innerHTML = `<svg width="2200" height="599"><g transform="translate(-439 0)">${s}</g></svg>` +
  head(471, 88, '&lt;&lt; 18-MIDI-MIDI') + head(798, 88, '18-MIDI-MIDI') + head(740, 190, '21-Bass+-MIDI-glued');

/* ---------- mixer ---------- */
const modeBar = ch => `<button class="mode"><svg width="5" height="10"><path d="M0 0v10l5-5z"/></svg><span>${ch ? 'hannels' : 'disabled'}</span></button>`;
const topCtl = o => `<button class="mb ${o.ch ? 'on' : ''}" aria-label="Input">${o.ch ? jackOn : jackOff}</button><button class="chip">Rec</button>
  <button class="mb" aria-label="Record">${dot(o.ring)}</button><button class="mb ${o.ch ? 'on' : ''}" aria-label="Monitor">${phones(o.ch ? '#1d3a30' : '#fff')}</button>`;
const strip = o => `<div class="strip ${o.lit ? 'lit' : ''}"><div class="icon">${icons[o.icon] || ''}</div>
  <div class="well"><div class="fxlist">${(o.fx || []).map(slot).join('')}</div>${o.t ? `<div class="thumb" style="--t:${o.t}px"></div>` : ''}</div>
  ${modeBar(o.ch)}<div class="ctl">${topCtl(o)}</div></div>`;
const rea = ['~ReaLea', 'Fil', 'Trim', 'Rev', 'Del A'];
const groups = [
  { far: 1, cut: 1, s: [{}, {}, {}] },
  { s: [{ icon: 'bubble', fx: ['EQ', 'Comp', '@6:Re|60|40', '@7:De|40|25', '@8:De|50|33'], t: 66 }, {}, {}] },
  { s: [{ icon: 'bubble', fx: ['Gate', 'Comp', 'Eq', 'Sat', '@6:Re|60|40'], t: 46 }] },
  { far: 1, s: [{ icon: 'bubble' }, { fx: ['Gate', 'Comp', 'Eq', '@6:Re|68|50', '@7:De|0|5'], t: 51 }, { fx: ['ReaEQ', 'ReaCor', '@6:Re|80|60', '@7:De|55|38', '@8:De|0|5'], t: 66 }, { fx: ['EQ', 'Doppler', '@6:Re|50|33', '@7:De|66|45', '@8:De|0|5'], t: 66 }] },
  { wide: 1 },
  { s: [{ icon: 'clap' }] },
  { s: [{ icon: 'jack', fx: ['~ReaLear'] }, { fx: ['Rev', 'Del', 'EQ'] }, { fx: ['Del', 'Rev', '@35:R|100|66'] }, { fx: ['Del', 'Trim', 'Limit'] }] },
  { far: 1, s: [{ icon: 'speaker', ring: 1, fx: ['~ReaLea', 'Tail', 'Dist', 'HP', 'Fil'], t: 36 }, ...['desk', 'guitar', 'head', 'synth', 'keys'].map(icon => ({ icon, ring: 1, fx: rea, t: 42 }))] },
  { s: [{ icon: 'clef', fx: ['@39:D', '@40:E', '@41:W', '@42:H', '@43:L'], t: 78 }] },
  { s: [{ icon: 'desk' }] },
  { s: [{ fx: ['Eq', 'Dist', '- Shape', '- Shape', '- Squas'], t: 46 }] },
  { s: [{}, { fx: ['Note', 'Vel', 'Ctrl', 'Gate', 'Del'], t: 66 }, { fx: ['Note', 'Vel', 'Ctrl', 'Gate', 'Del'], t: 66 }, { ch: 1, fx: ['@48:1,', '@49:1,'] }] },
  { far: 1, s: [{ fx: ['@50:Tr'] }, { fx: ['ReaEQ'] }] },
  { s: [{ lit: 1, fx: ['Eq', 'Room'] }, { ch: 1, ring: 1, fx: ['Sampler'] }, { ch: 1, ring: 1, fx: ['Sampler'] }] },
  { s: [{ icon: 'guitar', ch: 1, fx: ['Sample', 'ADSR', 'Fil', 'Amp', '%Push'], t: 66 }] },
  { far: 1, s: [{ icon: 'head', ch: 1, ring: 1, fx: ['Eq', 'Amp', 'Wah', '+ Noise', 'Limit'], t: 58 }, { fx: ['Noise', 'Crackle', 'Rand', 'EQ'] }, { ch: 1, ring: 1, fx: ['Sampler', '@60:M', '@58:N'] }, { ch: 1, ring: 1, fx: ['Sampler', 'SC', '@58:N'] }] },
  { s: [{ icon: 'synth', fx: ['ReaEQ'] }] },
  { s: [{}, { fx: ['ReaVerb'] }, { fx: ['ReaDela', '@63:R|58|40'] }] },
  { s: [{ ch: 1, ring: 1, fx: ['Comp', 'Sample', 'Eq', 'Trim', '@64:T|50|28'], t: 78 }, { ch: 1, ring: 1, fx: ['Sample', 'Sample', 'EQ', 'Env', 'Fil'], t: 66 }, { ch: 1, ring: 1, fx: ['Saw', 'Saw+', 'Vel', 'Sus', 'Eq'] }] },
];
const wide = `<div class="wide-strip"><div class="icon">${icons.drums}</div><div class="wide-body"><div class="wide-ctl">${modeBar()}<div class="ctl">${topCtl({})}<hr>
  <button class="mb" aria-label="Input routing"><svg width="12" height="8"><path d="M0 4h4" stroke="#fff" stroke-width="2"/><rect x="4" y="1" width="7" height="6" fill="none" stroke="#fff"/></svg></button><button class="chip">In</button>
  <button class="mb long on" aria-label="Routing"><svg width="14" height="8"><path d="M0 4h4M10 4h4" stroke="#1d3a30" stroke-width="2"/><rect x="4" y="1" width="6" height="6" rx="1" fill="none" stroke="#1d3a30"/></svg><svg width="6" height="6"><circle cx="3" cy="3" r="3" fill="#1d3a30"/></svg></button><hr>
  <button class="mb long light"><svg width="14" height="10"><path d="M3 7L7 3l4 4" fill="none" stroke="#222" stroke-width="2"/><circle cx="3" cy="7" r="3"/><circle cx="7" cy="3" r="2"/><circle cx="11" cy="7" r="3"/></svg>Tr</button>
  <button class="mb fx2" aria-label="Effects"></button><button class="mb" aria-label="Phase"><svg width="10" height="10"><circle cx="5" cy="5" r="3.500" fill="none" stroke="#ddd"/><path d="M1 9l8-8" stroke="#ddd"/></svg></button>
  <button class="mb">M</button><button class="mb">S</button></div></div>
  <div class="fxlist wide-fx">${slot('Shelf')}<div class="slot eq"><b>Eq</b>${bigEq}</div>${slot('MBand')}<svg width="160" height="6"><path d="M0 0h160v6H0z"/></svg></div></div></div>`;
$('strips').innerHTML = groups.map(g => {
  if (g.wide) return `<div class="group">${wide}</div>`;
  const h = g.s.map(strip);
  if (g.cut) h[0] = `<div class="cutter">${h[0]}</div>`;
  return `<div class="group ${g.far ? 'far' : ''}">${h.join('')}</div>`;
}).join('');
$('master-fx').innerHTML = ['Eq', 'MBand', 'Loud', 'Exc', 'Boost', 'Sat', 'Limit', '@Dummy|100|70'].map(slot).join('');
```
